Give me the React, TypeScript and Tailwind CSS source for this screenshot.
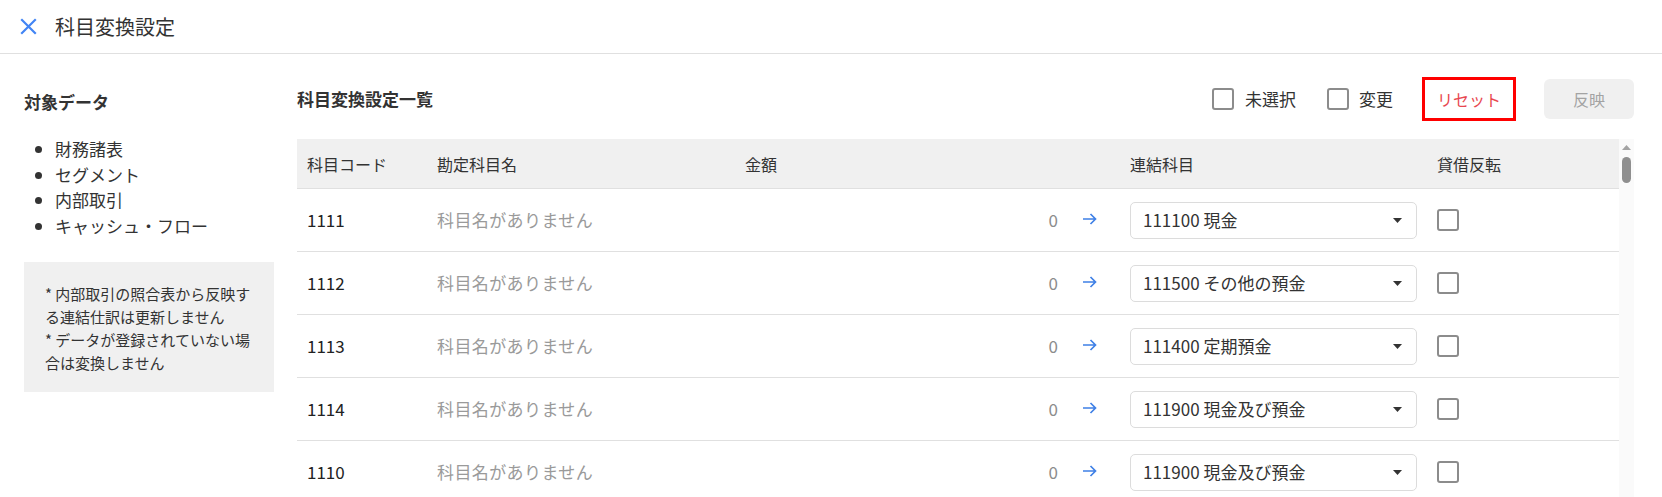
import React from "react";

const rows = [
  { code: "1111", target: "111100 現金" },
  { code: "1112", target: "111500 その他の預金" },
  { code: "1113", target: "111400 定期預金" },
  { code: "1114", target: "111900 現金及び預金" },
  { code: "1110", target: "111900 現金及び預金" },
];

const font = { fontFamily: '"Noto Sans CJK JP", "Noto Sans", sans-serif' };

const Box = ({ className = "" }: { className?: string }) => (
  <span
    className={`block w-[22px] h-[22px] border-2 border-[#8c8c8c] rounded-[3px] bg-white shrink-0 ${className}`}
  />
);

const CloseIcon = () => (
  <svg width="17" height="17" viewBox="0 0 17 17" fill="none">
    <path d="M2 2 L15 15 M15 2 L2 15" stroke="#4285f4" strokeWidth="2.2" strokeLinecap="square" />
  </svg>
);

const ArrowIcon = () => (
  <svg width="15" height="12" viewBox="0 0 15 12" fill="none">
    <path d="M1 6 H13.5 M8.5 1 L13.5 6 L8.5 11" stroke="#3f80e6" strokeWidth="1.7" />
  </svg>
);

const Caret = () => (
  <svg width="9" height="5" viewBox="0 0 9 5">
    <path d="M0 0 H9 L4.5 5 Z" fill="#333" />
  </svg>
);

const App = () => {
  return (
    <div className="h-screen w-full flex flex-col bg-white text-[#333] overflow-hidden" style={font}>
      {/* header */}
      <header className="h-[54px] shrink-0 border-b border-[#e0e0e0] flex items-center pl-[20px] gap-[18px]">
        <CloseIcon />
        <h1 className="text-[20px] leading-none text-[#333]">科目変換設定</h1>
      </header>

      <div className="flex-1 min-h-0 flex pt-[23px] pl-[24px] pr-[28px] gap-[23px]">
        {/* side */}
        <aside className="w-[250px] shrink-0">
          <h2 className="pt-[12px] text-[17px] leading-[25px] font-bold text-[#333]">対象データ</h2>
          <ul className="mt-[22px] list-disc pl-[31px] text-[17px] leading-[25.5px] text-[#333]">
            <li>財務諸表</li>
            <li>セグメント</li>
            <li>内部取引</li>
            <li>キャッシュ・フロー</li>
          </ul>
          <div className="mt-[24px] bg-[#f0f0f0] pt-[20px] pb-[18px] pl-[21px] pr-[20px] text-[15px] leading-[23px] text-[#333]">
            <p>* 内部取引の照合表から反映する連結仕訳は更新しません</p>
            <p>* データが登録されていない場合は変換しません</p>
          </div>
        </aside>

        {/* main */}
        <section className="flex-1 min-w-0 flex flex-col">
          <div className="h-[44px] flex items-center">
            <h2 className="text-[17px] font-bold text-[#333]">科目変換設定一覧</h2>
            <div className="ml-auto flex items-center">
              <label className="flex items-center gap-[11px] text-[17px]">
                <Box />
                未選択
              </label>
              <label className="ml-[31px] flex items-center gap-[10px] text-[17px]">
                <Box />
                変更
              </label>
              <button className="ml-[29px] w-[94px] h-[44px] border-[3px] border-[#ff0000] text-[16px] text-[#e8474f] bg-white">
                リセット
              </button>
              <button className="ml-[28px] w-[90px] h-[40px] rounded-[6px] bg-[#f0f0f0] text-[16px] text-[#a3a3a3]">
                反映
              </button>
            </div>
          </div>

          <div className="mt-[18px] flex-1 min-h-0 flex overflow-hidden">
            <div className="flex-1 min-w-0">
              <div className="grid grid-cols-[130px_308px_333px_52px_307px_1fr] h-[50px] items-center bg-[#f0f0f0] border-b border-[#e0e0e0] text-[16px] text-[#333]">
                <div className="px-[10px]">科目コード</div>
                <div className="px-[10px]">勘定科目名</div>
                <div className="px-[10px]">金額</div>
                <div />
                <div className="px-[10px]">連結科目</div>
                <div className="px-[10px]">貸借反転</div>
              </div>
              {rows.map((r, i) => (
                <div
                  key={i}
                  className="grid grid-cols-[130px_308px_333px_52px_307px_1fr] h-[63px] items-center border-b border-[#e0e0e0] text-[17px]"
                >
                  <div className="px-[10px] text-[#222]">{r.code}</div>
                  <div className="px-[10px] text-[#9a9a9a] tracking-[0.4px]">科目名がありません</div>
                  <div className="px-[10px] text-right text-[#8c8c8c]">0</div>
                  <div className="pl-[14px] flex items-center -mt-[2px]">
                    <ArrowIcon />
                  </div>
                  <div className="px-[10px]">
                    <div className="h-[37px] border border-[#dcdcdc] rounded-[5px] flex items-center pl-[12px] pr-[14px] text-[#333]">
                      <span className="flex-1">{r.target}</span>
                      <Caret />
                    </div>
                  </div>
                  <div className="px-[10px]">
                    <Box />
                  </div>
                </div>
              ))}
            </div>
            {/* scrollbar */}
            <div className="w-[15px] shrink-0 bg-[#fafafa] flex flex-col items-center pt-[6px]">
              <svg width="9" height="5" viewBox="0 0 9 5">
                <path d="M0 5 H9 L4.5 0 Z" fill="#a3a3a3" />
              </svg>
              <div className="mt-[7px] w-[9px] h-[26px] rounded-full bg-[#8f8f8f]" />
            </div>
          </div>
        </section>
      </div>
    </div>
  );
};

export default App;
